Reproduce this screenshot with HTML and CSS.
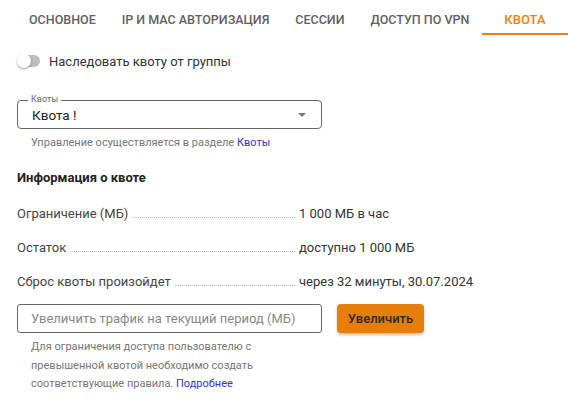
FILE: index.html
```html
<!DOCTYPE html>
<html lang="ru">
<head>
    <meta charset="UTF-8">
    <meta name="viewport" content="width=device-width, initial-scale=1.0">
    <title>Квота</title>
    <link rel="stylesheet" href="styles.css">
</head>
<body>
    <nav class="tabs">
        <div class="tab">Основное</div>
        <div class="tab">IP и MAC авторизация</div>
        <div class="tab">Сессии</div>
        <div class="tab">Доступ по VPN</div>
        <div class="tab active">Квота</div>
    </nav>

    <div class="content">
        <label class="toggle-row">
            <span class="switch"></span>
            Наследовать квоту от группы
        </label>

        <div class="field">
            <span class="field-label">Квоты</span>
            <span class="field-value">Квота !</span>
            <span class="arrow"></span>
        </div>
        <p class="helper">Управление осуществляется в разделе <a href="#">Квоты</a></p>

        <h3 class="title">Информация о квоте</h3>

        <div class="info">
            <div class="row">
                <span class="key">Ограничение (МБ)<span class="leader"></span></span>
                <span class="val">1 000 МБ в час</span>
            </div>
            <div class="row">
                <span class="key">Остаток<span class="leader"></span></span>
                <span class="val">доступно 1 000 МБ</span>
            </div>
            <div class="row">
                <span class="key">Сброс квоты произойдет<span class="leader"></span></span>
                <span class="val">через 32 минуты, 30.07.2024</span>
            </div>
        </div>

        <div class="add-row">
            <input class="input" type="text" placeholder="Увеличить трафик на текущий период (МБ)">
            <button class="btn">Увеличить</button>
        </div>
        <p class="note">Для ограничения доступа пользователю с превышенной квотой необходимо создать соответствующие правила. <a href="#">Подробнее</a></p>
    </div>
</body>
</html>
```

FILE: styles.css
```css
body {
    margin: 0;
    font-family: Roboto, "Liberation Sans", sans-serif;
    color: #333;
    background: #fff;
}

.tabs {
    display: flex;
    padding: 0 10px 0 16px;
}

.tab {
    padding: 7px 13px 0;
    height: 26px;
    line-height: 26px;
    font-size: 12.5px;
    font-weight: 500;
    white-space: nowrap;
    color: #616161;
    text-transform: uppercase;
    border-bottom: 2px solid transparent;
}

.tab.active {
    margin-left: auto;
    padding: 7px 22px 0;
    font-size: 13px;
    color: #e8820c;
    border-bottom-color: #e8820c;
}

.content {
    padding: 0 17px;
}

.toggle-row {
    display: flex;
    align-items: center;
    gap: 9px;
    height: 20px;
    margin-top: 16px;
    font-size: 13px;
    color: #333;
}

.switch {
    position: relative;
    width: 22px;
    height: 12px;
    margin-left: 1px;
    border-radius: 6px;
    background: #bdbdbd;
}

.switch::after {
    content: "";
    position: absolute;
    left: -1px;
    top: -1px;
    width: 14px;
    height: 14px;
    border-radius: 50%;
    background: #fff;
    box-shadow: 0 1px 2px rgba(0, 0, 0, 0.4);
}

.field {
    position: relative;
    display: flex;
    align-items: center;
    box-sizing: border-box;
    width: 305px;
    height: 29px;
    margin-top: 29px;
    padding: 0 14px;
    border: 1px solid #666;
    border-radius: 4px;
    font-size: 13.5px;
    color: #222;
}

.field-label {
    position: absolute;
    top: -7px;
    left: 10px;
    padding: 0 3px;
    background: #fff;
    font-size: 9px;
    line-height: 11px;
    color: #666;
}

.arrow {
    margin-left: auto;
    margin-right: 1px;
    border-left: 4px solid transparent;
    border-right: 4px solid transparent;
    border-top: 4px solid #777;
}

.helper {
    margin: 7px 0 0;
    padding-left: 14px;
    font-size: 11px;
    line-height: 14px;
    color: #757575;
}

a {
    color: #3535c4;
    text-decoration: none;
}

.title {
    margin: 20px 0 0;
    font-size: 13px;
    font-weight: 700;
    line-height: 16px;
    color: #222;
}

.info {
    display: flex;
    flex-direction: column;
    gap: 18px;
    margin-top: 20px;
}

.row {
    display: flex;
    font-size: 13px;
    line-height: 16px;
    color: #444;
}

.key {
    display: flex;
    width: 282px;
}

.leader {
    flex: 1;
    margin: 0 4px 4px;
    border-bottom: 1px dotted #bbb;
}

.val {
    color: #333;
}

.add-row {
    display: flex;
    gap: 15px;
    margin-top: 14px;
}

.input {
    box-sizing: border-box;
    width: 305px;
    height: 29px;
    padding: 0 13px;
    border: 1px solid #666;
    border-radius: 3px;
    font-family: inherit;
    font-size: 13px;
    color: #333;
}

.input::placeholder {
    color: #888;
}

.btn {
    width: 87px;
    height: 29px;
    border: none;
    border-radius: 4px;
    background: #e67e0a;
    color: #2a2a2a;
    font-family: inherit;
    font-size: 13px;
    font-weight: 500;
    box-shadow: 0 2px 3px rgba(0, 0, 0, 0.25);
    cursor: pointer;
}

.note {
    max-width: 250px;
    margin: 5px 0 0;
    padding-left: 14px;
    font-size: 11px;
    line-height: 18.5px;
    color: #757575;
}
```
